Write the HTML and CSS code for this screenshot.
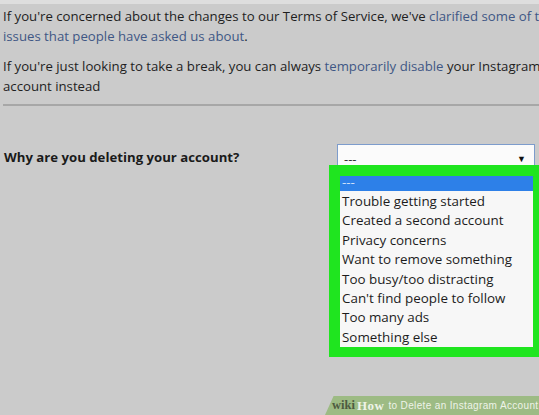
FILE: index.html
```html
<!DOCTYPE html>
<html>
<head>
<meta charset="utf-8">
<link rel="stylesheet" href="styles.css">
</head>
<body>
<div class="page">
  <div class="topstrip"></div>
  <div class="content">
    <p class="para first">If you're concerned about the changes to our Terms of Service, we've <span class="link">clarified some of the</span><br><span class="link">issues that people have asked us about</span>.</p>
    <p class="para">If you're just looking to take a break, you can always <span class="link">temporarily disable</span> your Instagram<br>account instead</p>
    <div class="rule"></div>
    <div class="question">
      <div class="label">Why are you deleting your account?</div>
      <div class="selectwrap">
        <div class="select">
          <span class="sel-value">---</span>
          <span class="arrow">&#9660;</span>
        </div>
        <div class="dropdown">
          <ul class="list">
            <li class="opt selected">---</li>
            <li class="opt">Trouble getting started</li>
            <li class="opt">Created a second account</li>
            <li class="opt">Privacy concerns</li>
            <li class="opt">Want to remove something</li>
            <li class="opt">Too busy/too distracting</li>
            <li class="opt">Can't find people to follow</li>
            <li class="opt">Too many ads</li>
            <li class="opt">Something else</li>
          </ul>
        </div>
      </div>
    </div>
  </div>
  <div class="badge"><span class="wiki">wiki</span><span class="how">How</span><span class="title">to Delete an Instagram Account</span></div>
</div>
</body>
</html>
```

FILE: styles.css
```css
html, body {
  margin: 0;
  padding: 0;
}
body {
  background: #cbcbcb;
  width: 539px;
  height: 415px;
  overflow: hidden;
  font-family: "Open Sans", "Noto Sans", sans-serif;
  color: #222;
}
.page {
  position: relative;
  width: 539px;
  height: 415px;
  overflow: hidden;
}
.topstrip {
  height: 4px;
  background: #dedede;
}
.content {
  width: 620px;
  padding-left: 3px;
}
.para {
  margin: 0;
  font-size: 13.2px;
  line-height: 20px;
  white-space: nowrap;
  color: #1e1e1e;
}
.para.first {
  margin-top: 2px;
}
.para + .para {
  margin-top: 10px;
}
.link {
  color: #3f5785;
}
.rule {
  margin-top: 8px;
  height: 2px;
  background: #a7a7a7;
  width: 560px;
}
.question {
  display: flex;
  align-items: flex-start;
  margin-top: 38px;
}
.label {
  width: 333px;
  font-weight: bold;
  font-size: 13.2px;
  line-height: 26px;
  padding-left: 1px;
  color: #1a1a1a;
}
.selectwrap {
  position: relative;
  width: 198px;
}
.select {
  box-sizing: border-box;
  height: 27px;
  background: #fbfbfb;
  border: 1px solid #7d9ccc;
  display: flex;
  align-items: center;
  justify-content: space-between;
  padding: 2px 8px 0 6px;
  font-size: 13px;
}
.sel-value {
  color: #333;
}
.arrow {
  font-size: 9px;
  color: #111;
}
.dropdown {
  position: absolute;
  left: -8px;
  top: 21px;
  width: 210px;
  height: 192px;
  box-sizing: border-box;
  background: #1fe51f;
  padding: 11px 6px 10px 11px;
}
.list {
  list-style: none;
  margin: 0;
  padding: 0;
  background: #f7f7f7;
  height: 171px;
  font-size: 13.4px;
  color: #1c1c1c;
}
.opt {
  height: 19.4px;
  line-height: 19.4px;
  padding-left: 2px;
  white-space: nowrap;
}
.opt.selected {
  height: 15px;
  line-height: 13px;
  margin-bottom: 1px;
  background: #2d80e8;
  color: #cfe0fa;
}
.badge {
  position: absolute;
  right: 0;
  bottom: 0;
  width: 214px;
  height: 19px;
  background: #9dbb84;
  clip-path: polygon(4% 0, 100% 0, 100% 100%, 0 100%);
  display: flex;
  align-items: center;
  padding-left: 7px;
  box-sizing: border-box;
  font-family: "Liberation Sans", sans-serif;
  font-size: 10px;
  white-space: nowrap;
  color: #eef3e8;
}
.wiki {
  font-family: "Liberation Serif", serif;
  font-weight: bold;
  font-size: 12.5px;
  color: #4d5a40;
  margin-right: 2px;
}
.how {
  font-weight: bold;
  font-family: "Liberation Serif", serif;
  font-size: 13px;
  letter-spacing: 0.5px;
  margin-right: 4px;
}
.title {
  letter-spacing: 0.35px;
}
```
